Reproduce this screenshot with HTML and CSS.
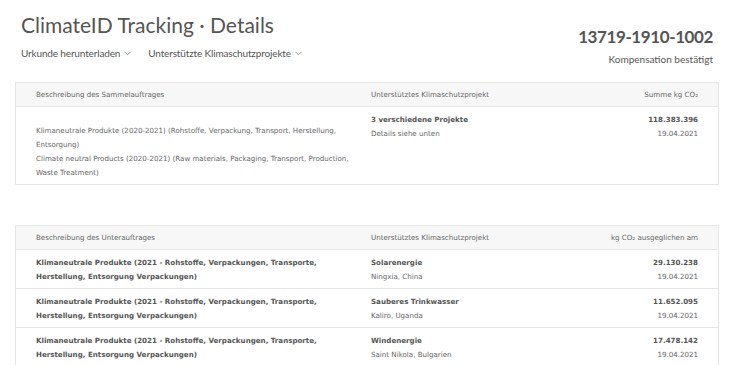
FILE: index.html
```html
<!DOCTYPE html>
<html lang="de">
<head>
    <meta charset="UTF-8">
    <meta name="viewport" content="width=device-width, initial-scale=1.0">
    <title>ClimateID Tracking · Details</title>
    <link rel="stylesheet" href="styles.css">
</head>
<body>
    <header class="page-head">
        <div class="head-left">
            <h1 class="title">ClimateID Tracking · Details</h1>
            <nav class="sub-nav">
                <span class="nav-item">Urkunde herunterladen
                    <svg class="chev" width="7" height="5" viewBox="0 0 7 5"><path d="M0.5 0.8 L3.5 3.8 L6.5 0.8" fill="none" stroke="#999" stroke-width="1"/></svg>
                </span>
                <span class="nav-item">Unterstützte Klimaschutzprojekte
                    <svg class="chev" width="7" height="5" viewBox="0 0 7 5"><path d="M0.5 0.8 L3.5 3.8 L6.5 0.8" fill="none" stroke="#999" stroke-width="1"/></svg>
                </span>
            </nav>
        </div>
        <div class="head-right">
            <div class="order-id">13719-1910-1002</div>
            <div class="order-status">Kompensation bestätigt</div>
        </div>
    </header>

    <section class="card">
        <div class="row head-row">
            <div class="cell first">Beschreibung des Sammelauftrages</div>
            <div class="cell">Unterstütztes Klimaschutzprojekt</div>
            <div class="cell last">Summe kg CO₂</div>
        </div>
        <div class="row">
            <div class="cell first summary-desc">
                Klimaneutrale Produkte (2020-2021) (Rohstoffe, Verpackung, Transport, Herstellung, Entsorgung)<br>
                Climate neutral Products (2020-2021) (Raw materials, Packaging, Transport, Production, Waste Treatment)
            </div>
            <div class="cell">
                <strong>3 verschiedene Projekte</strong><br>
                Details siehe unten
            </div>
            <div class="cell last">
                <strong>118.383.396</strong><br>
                19.04.2021
            </div>
        </div>
    </section>

    <section class="card second">
        <div class="row head-row">
            <div class="cell first">Beschreibung des Unterauftrages</div>
            <div class="cell">Unterstütztes Klimaschutzprojekt</div>
            <div class="cell last">kg CO₂ ausgeglichen am</div>
        </div>
        <div class="row">
            <div class="cell first"><strong>Klimaneutrale Produkte (2021 - Rohstoffe, Verpackungen, Transporte, Herstellung, Entsorgung Verpackungen)</strong></div>
            <div class="cell"><strong>Solarenergie</strong><br>Ningxia, China</div>
            <div class="cell last"><strong>29.130.238</strong><br>19.04.2021</div>
        </div>
        <div class="row">
            <div class="cell first"><strong>Klimaneutrale Produkte (2021 - Rohstoffe, Verpackungen, Transporte, Herstellung, Entsorgung Verpackungen)</strong></div>
            <div class="cell"><strong>Sauberes Trinkwasser</strong><br>Kaliro, Uganda</div>
            <div class="cell last"><strong>11.652.095</strong><br>19.04.2021</div>
        </div>
        <div class="row">
            <div class="cell first"><strong>Klimaneutrale Produkte (2021 - Rohstoffe, Verpackungen, Transporte, Herstellung, Entsorgung Verpackungen)</strong></div>
            <div class="cell"><strong>Windenergie</strong><br>Saint Nikola, Bulgarien</div>
            <div class="cell last"><strong>17.478.142</strong><br>19.04.2021</div>
        </div>
    </section>
</body>
</html>
```

FILE: styles.css
```css
body {
    margin: 0;
    background-color: #fff;
    color: #555;
    font-family: Lato, "Open Sans", sans-serif;
}

.page-head {
    display: flex;
    justify-content: space-between;
    padding: 12px 34px 0 21px;
    height: 70px;
    box-sizing: border-box;
}
.title {
    margin: 0;
    font-size: 21px;
    font-weight: normal;
    line-height: 26px;
    color: #555;
}
.sub-nav {
    display: flex;
    gap: 17px;
    margin-top: 9px;
    font-size: 10px;
    letter-spacing: -0.15px;
    color: #555;
}
.nav-item {
    display: flex;
    align-items: center;
    gap: 4px;
}
.chev {
    margin-top: 1px;
}
.head-right {
    text-align: right;
    padding-top: 14px;
}
.order-id {
    font-size: 17px;
    font-weight: bold;
    line-height: 22px;
    letter-spacing: -0.4px;
    color: #555;
}
.order-status {
    font-size: 10px;
    margin-top: 5px;
}

.card {
    width: 704px;
    margin: 12px 0 0 15px;
    border: 1px solid #e6e6e6;
    box-sizing: border-box;
    font-family: "DejaVu Sans", Verdana, sans-serif;
    font-size: 7.1px;
    line-height: 14px;
    color: #666;
}
.card.second {
    margin-top: 40px;
}
.row {
    display: grid;
    grid-template-columns: 355px 1fr 160px;
    border-bottom: 1px solid #e6e6e6;
}
.row:last-child {
    border-bottom: none;
}
.card.second .row:last-child {
    border-bottom: 1px solid #e6e6e6;
}
.head-row {
    background-color: #f7f7f7;
    height: 24px;
    align-items: center;
    padding-top: 1px;
    box-sizing: border-box;
}
.cell {
    padding: 6px 0 4px 0;
}
.head-row .cell {
    padding: 0;
}
.cell.first {
    padding-left: 20px;
    padding-right: 8px;
}
.cell.last {
    text-align: right;
    padding-right: 20px;
}
.summary-desc {
    padding-top: 17px;
    padding-bottom: 4px;
}
strong {
    color: #555;
}
```
